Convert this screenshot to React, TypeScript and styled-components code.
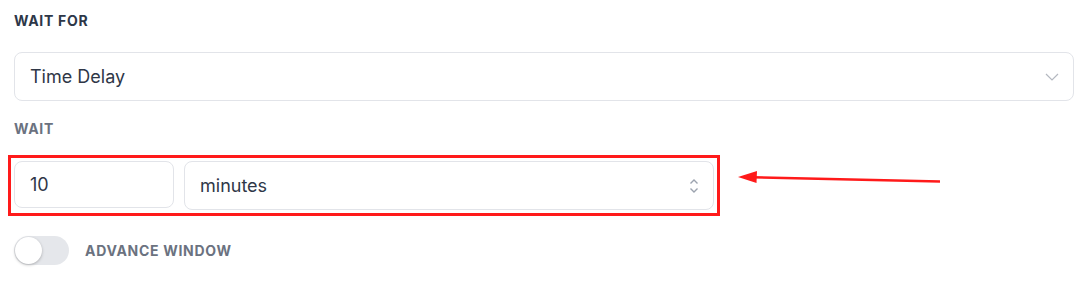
import React from 'react'
import styled, { createGlobalStyle } from 'styled-components'

const GlobalStyle = createGlobalStyle`
  html, body {
    margin: 0;
    padding: 0;
    background: #ffffff;
  }
  body {
    font-family: Inter, "Noto Sans", "Liberation Sans", sans-serif;
  }
`

const Page = styled.div`
  position: relative;
  width: 1085px;
  height: 285px;
  box-sizing: border-box;
  padding: 11px 11px 0 14px;
  display: flex;
  flex-direction: column;
`

const Label = styled.div<{ $dark?: boolean }>`
  font-size: 14px;
  line-height: 20px;
  font-weight: 700;
  letter-spacing: 0.05em;
  text-transform: uppercase;
  color: ${(p) => (p.$dark ? '#2d3748' : '#6b7280')};
`

const Field = styled.div<{ $width?: number }>`
  box-sizing: border-box;
  display: flex;
  align-items: center;
  justify-content: space-between;
  height: ${(p) => (p.$width ? 47 : 49)}px;
  width: ${(p) => (p.$width ? `${p.$width}px` : 'auto')};
  flex: ${(p) => (p.$width ? 'none' : '1')};
  padding: 0 14px 0 15px;
  border: 1px solid #e2e4e9;
  border-radius: 8px;
  background: #fff;
  font-size: 18px;
  color: #2f3747;
`

const Section = styled.div<{ $top: number }>`
  margin-top: ${(p) => p.$top}px;
`

const InputRow = styled.div`
  position: relative;
  display: flex;
  gap: 10px;
  width: 700px;
  outline: 3px solid #ff1a1a;
  outline-offset: 3px;
`

const ArrowMark = styled.svg`
  position: absolute;
  left: 724px;
  top: 6px;
  overflow: visible;
`

const ToggleRow = styled.div`
  display: flex;
  align-items: center;
  gap: 16px;
`

const Track = styled.div`
  position: relative;
  width: 55px;
  height: 29px;
  border-radius: 15px;
  background: #e5e7eb;
`

const Knob = styled.div`
  position: absolute;
  left: 1px;
  top: 1px;
  width: 27px;
  height: 27px;
  border-radius: 50%;
  background: #fff;
  box-shadow: 0 1px 3px rgba(0, 0, 0, 0.25);
`

const ChevronDown = () => (
  <svg width="14" height="8" viewBox="0 0 14 8" fill="none">
    <path d="M1 1l6 6 6-6" stroke="#b4b8c0" strokeWidth="1.2" />
  </svg>
)

const UpDown = () => (
  <svg width="10" height="16" viewBox="0 0 10 16" fill="none">
    <path d="M1.5 5.5L5 2l3.5 3.5M1.5 10.5L5 14l3.5-3.5" stroke="#9ca3af" strokeWidth="1.4" />
  </svg>
)

const App = () => {
  return (
    <Page>
      <GlobalStyle />
      <Label $dark>Wait For</Label>
      <Section $top={21}>
        <Field>
          <span>Time Delay</span>
          <ChevronDown />
        </Field>
      </Section>
      <Section $top={18}>
        <Label>Wait</Label>
      </Section>
      <Section $top={22}>
        <InputRow>
          <Field $width={160}>
            <span>10</span>
          </Field>
          <Field>
            <span>minutes</span>
            <UpDown />
          </Field>
          <ArrowMark width="205" height="14" viewBox="0 0 205 14">
            <path d="M14 10.2L202 14.5" stroke="#ff1a1a" strokeWidth="2.5" />
            <path d="M0 10L19 4L18.5 16z" fill="#ff1a1a" />
          </ArrowMark>
        </InputRow>
      </Section>
      <Section $top={26}>
        <ToggleRow>
          <Track>
            <Knob />
          </Track>
          <Label>Advance Window</Label>
        </ToggleRow>
      </Section>
    </Page>
  )
}

export default App
